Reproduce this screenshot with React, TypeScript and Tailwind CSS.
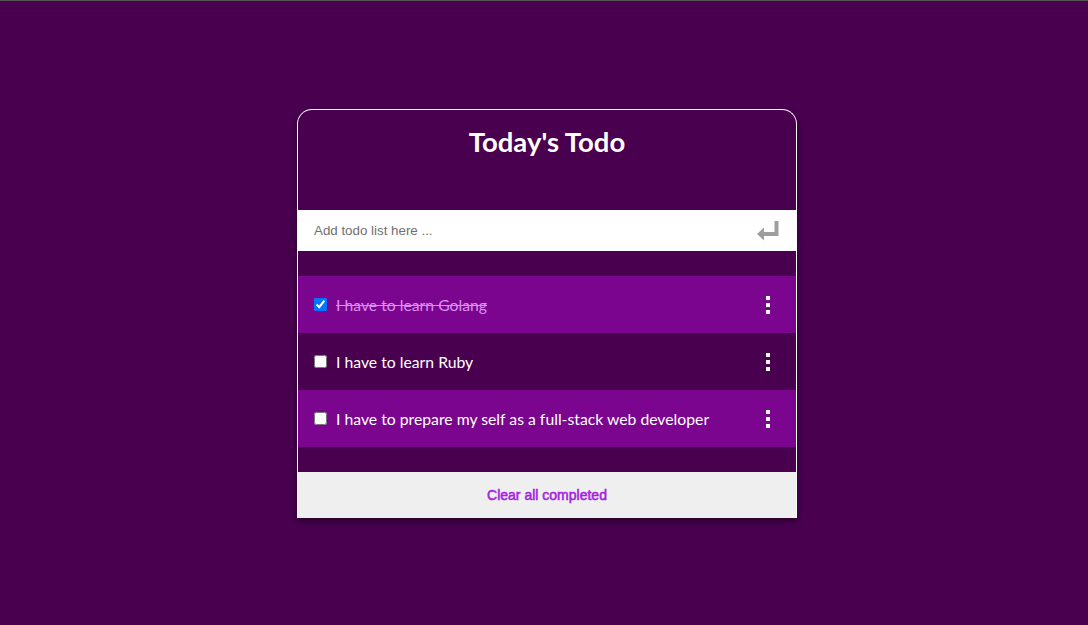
import React from 'react'

const todos = [
  { id: 1, text: 'I have to learn Golang', done: true },
  { id: 2, text: 'I have to learn Ruby', done: false },
  { id: 3, text: 'I have to prepare my self as a full-stack web developer', done: false },
]

function Dots() {
  return (
    <svg width="6" height="18" viewBox="0 0 6 18" className="text-white">
      <rect x="1" y="0" width="4" height="4" fill="currentColor" />
      <rect x="1" y="7" width="4" height="4" fill="currentColor" />
      <rect x="1" y="14" width="4" height="4" fill="currentColor" />
    </svg>
  )
}

function EnterIcon() {
  return (
    <svg width="24" height="22" viewBox="0 0 24 22" fill="none">
      <path d="M20.5 1 V14 H6" stroke="#9e9e9e" strokeWidth="4" />
      <path d="M1 14 L8 7.5 V20.5 Z" fill="#9e9e9e" />
    </svg>
  )
}

export default function App() {
  return (
    <div className="min-h-[625px] w-full bg-[#48004f] border-t border-[#555] pt-[108px] flex justify-center pl-[6px]" style={{ fontFamily: 'Lato, "Liberation Sans", sans-serif' }}>
      <div className="w-[500px] self-start rounded-t-[15px] border border-white border-b-0 shadow-[0_3px_6px_rgba(0,0,0,0.45)] overflow-hidden">
        <div className="h-[100px] pt-[15px] text-center">
          <h1 className="text-[27.5px] font-bold text-white leading-[34px]">Today's Todo</h1>
        </div>
        <div className="h-[41px] bg-white flex items-center pl-4 pr-4">
          <span className="flex-1 text-[13.33px] text-[#6f6f6f]" style={{ fontFamily: '"Liberation Sans", Arial, sans-serif' }}>Add todo list here ...</span>
          <EnterIcon />
        </div>
        <div className="py-[25px]">
          {todos.map((t, i) => (
            <div key={t.id} className={`h-[57px] flex items-center pl-4 pr-[25px] ${i % 2 === 0 ? 'bg-[#7b058e]' : 'bg-[#48004f]'}`}>
              <input type="checkbox" readOnly checked={t.done} className="w-[13px] h-[13px] accent-[#0075ff] m-0" />
              <span className={`ml-[9px] flex-1 text-[15.75px] ${t.done ? 'line-through text-[#d88ff0]' : 'text-white'}`}>{t.text}</span>
              <Dots />
            </div>
          ))}
        </div>
        <div className="h-[46px] bg-[#efefef] flex items-center justify-center">
          <span className="text-[14px] text-[#a51ee0] [-webkit-text-stroke:0.55px_#a51ee0]" style={{ fontFamily: '"Liberation Sans", Arial, sans-serif' }}>Clear all completed</span>
        </div>
      </div>
    </div>
  )
}
